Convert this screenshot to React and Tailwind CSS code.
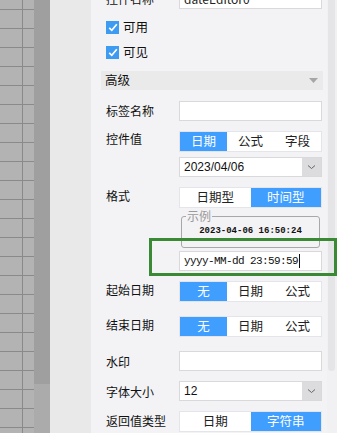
import React from 'react';

const cjk = { fontFamily: '"Noto Sans CJK SC", "Noto Sans", sans-serif' };
const mono = { fontFamily: '"Liberation Mono", "DejaVu Sans Mono", monospace' };

function Seg({ items, active }) {
  return (
    <div className="flex h-[21px] w-[143px] border border-[#e3e5ea] bg-white">
      {items.map((t, i) => (
        <div
          key={t}
          className={
            'flex flex-1 items-center justify-center text-[12.5px] leading-none ' +
            (i === active ? 'bg-[#409eff] text-white' : 'text-[#222]')
          }
        >
          {t}
        </div>
      ))}
    </div>
  );
}

function Input({ children }) {
  return (
    <div className="flex h-[20px] w-[143px] items-center border border-[#d9d9dc] bg-white px-1 text-[12px] text-[#222]">
      {children}
    </div>
  );
}

function Select({ value }) {
  return (
    <div className="flex h-[20px] w-[143px] border border-[#d9d9dc] bg-white">
      <div className="flex flex-1 items-center px-1 text-[12px] text-[#111]" style={{ fontFamily: '"Liberation Sans", sans-serif' }}>
        {value}
      </div>
      <div className="flex w-[19px] items-center justify-center bg-[#dcdcde]">
        <svg width="9" height="6" viewBox="0 0 9 6">
          <path d="M1 1.5 L4.5 4.5 L8 1.5" fill="none" stroke="#666" strokeWidth="1" />
        </svg>
      </div>
    </div>
  );
}

function Row({ label, children, className = '', labelClass = '' }) {
  return (
    <div className={'flex ' + className}>
      <div className={'w-[88px] shrink-0 pl-[15px] text-[12px] leading-none whitespace-nowrap text-[#111] ' + labelClass}>{label}</div>
      <div className="flex flex-col">{children}</div>
    </div>
  );
}

function Check({ label, className = '' }) {
  return (
    <div className={'flex items-center gap-[4px] pl-[15px] ' + className}>
      <div className="flex h-[13px] w-[13px] items-center justify-center bg-[#3d9bf2]">
        <svg width="10" height="9" viewBox="0 0 10 9">
          <path d="M1.2 4.8 L3.8 7.3 L8.8 1.2" fill="none" stroke="#fff" strokeWidth="1.7" />
        </svg>
      </div>
      <span className="text-[12.5px] leading-none text-[#111]">{label}</span>
    </div>
  );
}

function Grid() {
  return (
    <div className="relative h-full w-[34px] overflow-hidden bg-[#b3b3b3]">
      <div className="absolute left-[22px] top-0 h-full w-px bg-[#8a8a8a]" />
      <div className="flex flex-col pt-[9px]">
        {Array.from({ length: 23 }).map((_, i) => (
          <div key={i} className="h-[19px] border-t border-[#8a8a8a]" />
        ))}
      </div>
    </div>
  );
}

export default function App() {
  return (
    <div className="relative flex h-[433px] w-[337px] overflow-hidden bg-[#f3f3f5]" style={cjk}>
      <Grid />
      <div className="flex h-full w-[16px] flex-col bg-[#ababab]">
        <div className="h-[384px] bg-[#9f9f9f]" />
      </div>
      <div className="h-full w-[41px] bg-[#e9e9e9]" />

      <div className="h-full w-[236px] overflow-hidden">
        <div className="mt-[-11px] flex flex-col">
          <Row label="控件名称" labelClass="pt-[4px]">
            <Input>dateEditor0</Input>
          </Row>
          <Check label="可用" className="mt-[12px]" />
          <Check label="可见" className="mt-[12px]" />

          <div className="ml-[10px] mr-[4px] mt-[12px] flex h-[19px] items-center justify-between bg-[#eaeaea] pl-[4px] pr-[5px]">
            <span className="text-[12.5px] leading-none text-[#111]">高级</span>
            <svg width="9" height="5" viewBox="0 0 9 5">
              <path d="M0 0 L9 0 L4.5 5 Z" fill="#a6a6a6" />
            </svg>
          </div>

          <Row label="标签名称" className="mt-[11px]" labelClass="pt-[4px]">
            <Input />
          </Row>

          <Row label="控件值" className="mt-[10px]" labelClass="pt-[2px]">
            <Seg items={['日期', '公式', '字段']} active={0} />
            <div className="mt-[5px]">
              <Select value="2023/04/06" />
            </div>
          </Row>

          <Row label="格式" className="mt-[10px]" labelClass="pt-[3px]">
            <Seg items={['日期型', '时间型']} active={1} />
            <fieldset className="mx-[2px] mt-[2px] h-[38px] w-[139px] rounded-[3px] border border-[#a8a8a8] px-[4px]">
              <legend className="px-[1px] text-[12px] leading-none text-[#9a9a9a]">示例</legend>
              <div className="pt-[5px] text-center text-[9px] font-bold leading-none text-[#111]" style={mono}>
                2023-04-06 16:50:24
              </div>
            </fieldset>
            <div className="mt-[3px]">
              <Input>
                <span style={mono} className="whitespace-nowrap text-[11px] tracking-[-0.6px] text-[#111]">yyyy-MM-dd 23:59:59</span>
                <span className="ml-px h-[14px] w-px shrink-0 bg-[#111]" />
              </Input>
            </div>
          </Row>

          <Row label="起始日期" className="mt-[10px]" labelClass="pt-[3px]">
            <Seg items={['无', '日期', '公式']} active={0} />
          </Row>

          <Row label="结束日期" className="mt-[14px]" labelClass="pt-[3px]">
            <Seg items={['无', '日期', '公式']} active={0} />
          </Row>

          <Row label="水印" className="mt-[14px]" labelClass="pt-[5px]">
            <Input />
          </Row>

          <Row label="字体大小" className="mt-[10px]" labelClass="pt-[5px]">
            <Select value="12" />
          </Row>

          <Row label="返回值类型" className="mt-[10px]" labelClass="pt-[4px]">
            <Seg items={['日期', '字符串']} active={1} />
          </Row>
        </div>
      </div>

      <div className="flex h-full w-[10px] flex-col bg-[#f1f1f3]">
        <div className="ml-px h-[371px] w-[7px] rounded-b-[4px] bg-[#e5e5e7]" />
      </div>

      <div className="absolute left-[149px] top-[238px] h-[38px] w-[188px] border-[3px] border-[#3a8a35]" />
    </div>
  );
}
